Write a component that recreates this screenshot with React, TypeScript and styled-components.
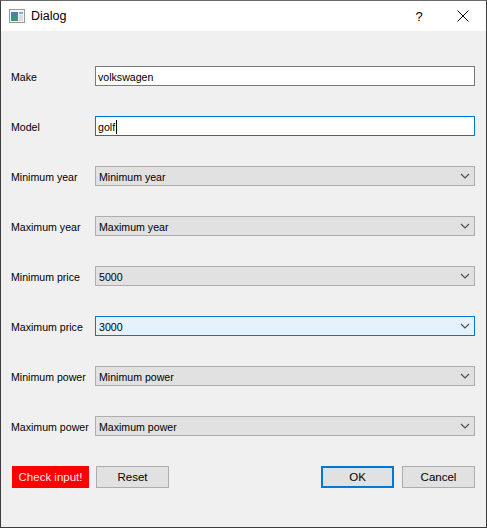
import React from "react";
import styled, { createGlobalStyle } from "styled-components";

const Global = createGlobalStyle`
  html, body { margin: 0; padding: 0; background: #ffffff; }
  * { box-sizing: border-box; }
`;

const Window = styled.div`
  width: 487px;
  height: 528px;
  border: 1px solid #3c3c3c;
  border-top-color: #6a6a6a;
  display: flex;
  flex-direction: column;
  background: #f0f0f0;
  font-family: "Liberation Sans", Arial, sans-serif;
`;

const TitleBar = styled.div`
  height: 30px;
  background: #ffffff;
  display: flex;
  align-items: center;
  padding-left: 8px;
  flex-shrink: 0;
`;

const TitleText = styled.span`
  font-family: "Liberation Sans", Arial, sans-serif;
  font-size: 12.5px;
  color: #000;
  margin-left: 6px;
  flex: 1;
  margin-top: -1px;
`;

const TitleButton = styled.div<{ $w: number }>`
  width: ${(p) => p.$w}px;
  height: 30px;
  display: flex;
  align-items: center;
  justify-content: center;
  font-family: "Liberation Sans", Arial, sans-serif;
  font-size: 13px;
  color: #000;
`;

const Body = styled.div`
  flex: 1;
  padding: 35px 0 0 10px;
  display: flex;
  flex-direction: column;
  gap: 30px;
`;

const Row = styled.div`
  display: flex;
  align-items: center;
  height: 20px;
  padding-right: 11px;
`;

const Label = styled.div`
  width: 84px;
  font-family: "Liberation Sans", Tahoma, Arial, sans-serif;
  font-size: 10.6px;
  color: #000;
  padding-top: 1px;
`;

const TextInput = styled.div<{ $focus?: boolean }>`
  flex: 1;
  height: 20px;
  background: #fff;
  border: 1px solid ${(p) => (p.$focus ? "#0078d7" : "#7a7a7a")};
  display: flex;
  align-items: center;
  padding-left: 2px;
  padding-top: 1px;
  font-family: "Liberation Sans", Tahoma, Arial, sans-serif;
  font-size: 10.6px;
  color: #000;
`;

const Caret = styled.span`
  display: inline-block;
  width: 1px;
  height: 14px;
  background: #000;
  margin-left: 1px;
`;

const Combo = styled.div<{ $focus?: boolean }>`
  flex: 1;
  height: 20px;
  background: ${(p) => (p.$focus ? "#e5f1fb" : "#e1e1e1")};
  border: 1px solid ${(p) => (p.$focus ? "#0078d7" : "#adadad")};
  display: flex;
  align-items: center;
  padding-left: 3px;
  padding-right: 4px;
  font-family: "Liberation Sans", Tahoma, Arial, sans-serif;
  font-size: 10.6px;
  color: #000;
`;

const ComboText = styled.span`
  flex: 1;
  padding-top: 1px;
`;

const ButtonRow = styled.div`
  display: flex;
  align-items: center;
  height: 22px;
  padding-left: 1px;
  padding-right: 11px;
`;

const Button = styled.div<{ $variant?: "danger" | "default" | "primary" }>`
  width: ${(p) => (p.$variant === "danger" ? 77 : 73)}px;
  height: 22px;
  display: flex;
  align-items: center;
  justify-content: center;
  font-family: "Liberation Sans", Arial, sans-serif;
  font-size: 11.5px;
  background: ${(p) => (p.$variant === "danger" ? "#ff0000" : "#e1e1e1")};
  color: ${(p) => (p.$variant === "danger" ? "#ffe6ee" : "#000")};
  border: ${(p) =>
    p.$variant === "danger"
      ? "none"
      : p.$variant === "primary"
      ? "2px solid #0078d7"
      : "1px solid #adadad"};
`;

const Spacer = styled.div<{ $w?: number }>`
  ${(p) => (p.$w ? `width: ${p.$w}px;` : "flex: 1;")}
`;

const Chevron = () => (
  <svg width="10" height="6" viewBox="0 0 10 6">
    <polyline points="1,1 5,5 9,1" fill="none" stroke="#505050" strokeWidth="1.2" />
  </svg>
);

const AppIcon = () => (
  <svg width="16" height="14" viewBox="0 0 16 14">
    <rect x="0.5" y="0.5" width="15" height="13" fill="#f4f4f4" stroke="#9a9a9a" />
    <defs>
      <linearGradient id="g" x1="0" y1="0" x2="0" y2="1">
        <stop offset="0" stopColor="#4a7fb0" />
        <stop offset="1" stopColor="#3c9a6a" />
      </linearGradient>
    </defs>
    <rect x="2" y="3" width="7" height="9" fill="url(#g)" />
    <rect x="10" y="3" width="4" height="2" fill="#88aacc" />
    <rect x="10" y="6" width="4" height="6" fill="#dcdcdc" />
  </svg>
);

const CloseIcon = () => (
  <svg width="12" height="12" viewBox="0 0 12 12">
    <path d="M0.5 0.5 L11.5 11.5 M11.5 0.5 L0.5 11.5" stroke="#000" strokeWidth="1" />
  </svg>
);

const combos: { label: string; value: string; focus?: boolean }[] = [
  { label: "Minimum year", value: "Minimum year" },
  { label: "Maximum year", value: "Maximum year" },
  { label: "Minimum price", value: "5000" },
  { label: "Maximum price", value: "3000", focus: true },
  { label: "Minimum power", value: "Minimum power" },
  { label: "Maximum power", value: "Maximum power" },
];

export default function App() {
  return (
    <>
      <Global />
      <Window>
        <TitleBar>
          <AppIcon />
          <TitleText>Dialog</TitleText>
          <TitleButton $w={42}>?</TitleButton>
          <TitleButton $w={46}>
            <CloseIcon />
          </TitleButton>
        </TitleBar>
        <Body>
          <Row>
            <Label>Make</Label>
            <TextInput>volkswagen</TextInput>
          </Row>
          <Row>
            <Label>Model</Label>
            <TextInput $focus>
              golf
              <Caret />
            </TextInput>
          </Row>
          {combos.map((c) => (
            <Row key={c.label}>
              <Label>{c.label}</Label>
              <Combo $focus={c.focus}>
                <ComboText>{c.value}</ComboText>
                <Chevron />
              </Combo>
            </Row>
          ))}
          <ButtonRow>
            <Button $variant="danger">Check input!</Button>
            <Spacer $w={7} />
            <Button>Reset</Button>
            <Spacer />
            <Button $variant="primary">OK</Button>
            <Spacer $w={8} />
            <Button>Cancel</Button>
          </ButtonRow>
        </Body>
      </Window>
    </>
  );
}
